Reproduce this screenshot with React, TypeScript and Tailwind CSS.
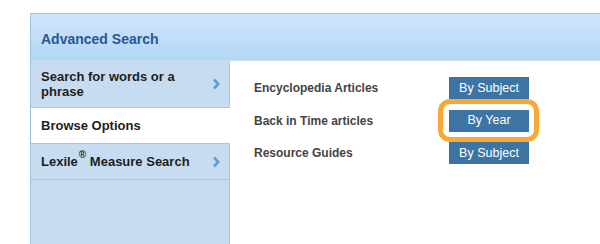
import React from 'react';

function Chevron() {
  return (
    <svg width="8" height="12" viewBox="0 0 8 12" className="shrink-0">
      <path d="M2 1.5 L6.2 6 L2 10.5" fill="none" stroke="#5a9fd4" strokeWidth="2.6" strokeLinecap="butt" strokeLinejoin="miter" />
    </svg>
  );
}

const rows = [
  { label: 'Encyclopedia Articles', button: 'By Subject', highlight: false },
  { label: 'Back in Time articles', button: 'By Year', highlight: true },
  { label: 'Resource Guides', button: 'By Subject', highlight: false },
];

export default function App() {
  return (
    <div className="w-[600px] h-[244px] bg-white pt-[13px] pl-[30px] overflow-hidden" style={{ fontFamily: '"Liberation Sans", Arial, sans-serif' }}>
      <div className="flex flex-col h-[240px] border-l border-t border-[#9cc2e2]">
        {/* header */}
        <div className="h-[47px] shrink-0 flex items-center pl-[10px] pt-[4px] bg-gradient-to-b from-[#cfe6fa] to-[#b2d7f5] border-b border-[#c3dcf0]">
          <span className="text-[14px] font-bold text-[#2a5795]">Advanced Search</span>
        </div>

        <div className="flex flex-1">
          {/* sidebar */}
          <div className="w-[199px] shrink-0 flex flex-col bg-[#c8dcf1] border-r border-[#a9c6e3]">
            <div className="h-[47px] flex items-center justify-between pl-[10px] pr-[9px] border-b border-[#a9c6e3]">
              <span className="text-[13px] font-bold text-[#1e1e1e] leading-[15px]">Search for words or a<br />phrase</span>
              <Chevron />
            </div>
            <div className="h-[35px] flex items-center pl-[10px] bg-white -mr-px">
              <span className="text-[13px] font-bold text-[#1e1e1e]">Browse Options</span>
            </div>
            <div className="h-[37px] flex items-center justify-between pl-[10px] pr-[9px] border-t border-b border-[#a9c6e3]">
              <span className="text-[13px] font-bold text-[#1e1e1e]">
                Lexile<span className="inline-block text-[10px] leading-none align-top -mt-[2px] ml-px">®</span> Measure Search
              </span>
              <Chevron />
            </div>
          </div>

          {/* content */}
          <div className="flex-1 flex flex-col gap-[10.5px] pt-[16px] pl-[24px]">
            {rows.map((r) => (
              <div key={r.label} className="flex items-center h-[22px]">
                <span className="w-[195px] text-[12px] font-bold text-[#444444]">{r.label}</span>
                <div className="relative">
                  <div className="w-[80px] h-[22px] flex items-center justify-center bg-[#3e74a3] text-white text-[12.5px]">
                    {r.button}
                  </div>
                  {r.highlight && (
                    <div className="absolute -left-[11px] -right-[10px] -top-[11px] -bottom-[10px] border-[5px] border-[#f7a935] rounded-[12px] pointer-events-none" />
                  )}
                </div>
              </div>
            ))}
          </div>
        </div>
      </div>
    </div>
  );
}
